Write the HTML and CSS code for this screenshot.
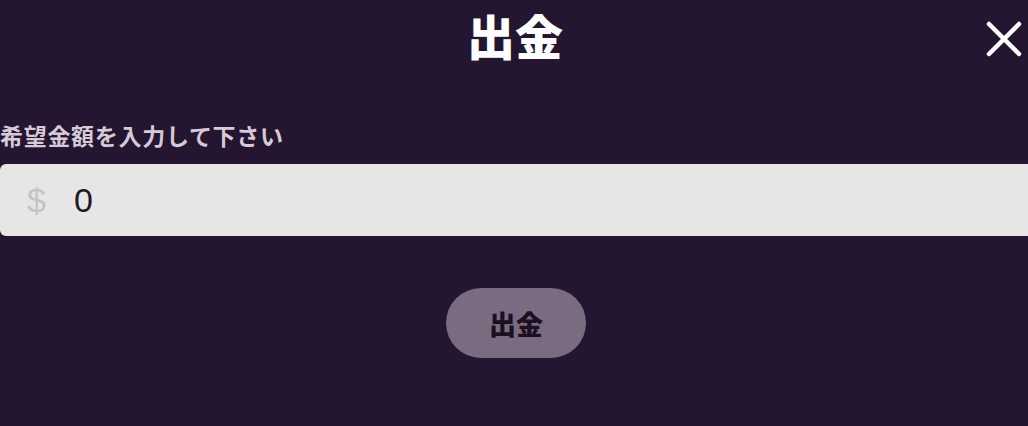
FILE: index.html
```html
<!DOCTYPE html>
<html lang="ja">
<head>
    <meta charset="UTF-8">
    <meta name="viewport" content="width=device-width, initial-scale=1.0">
    <title>出金</title>
    <link rel="stylesheet" href="styles.css">
</head>
<body>
    <div class="modal">
        <div class="modal-header">
            <h1 class="modal-title">出金</h1>
            <button class="close-btn" aria-label="閉じる">
                <svg width="36" height="36" viewBox="0 0 36 36">
                    <path d="M3 3 L33 33 M33 3 L3 33" stroke="#fff" stroke-width="4.5" stroke-linecap="round"/>
                </svg>
            </button>
        </div>

        <label class="field-label" for="amount">希望金額を入力して下さい</label>
        <div class="amount-box">
            <span class="currency">$</span>
            <input class="amount-input" id="amount" type="text" value="0">
        </div>

        <div class="actions">
            <button class="submit-btn">出金</button>
        </div>
    </div>
</body>
</html>
```

FILE: styles.css
```css
body {
    margin: 0;
    background: #241530;
    font-family: "Noto Sans CJK JP", "Noto Sans", sans-serif;
    overflow: hidden;
}

.modal {
    width: 1028px;
    height: 426px;
}

.modal-header {
    position: relative;
    height: 84px;
    display: flex;
    justify-content: center;
    align-items: flex-start;
}

.modal-title {
    margin: 0;
    padding-left: 2px;
    color: #fff;
    font-size: 48px;
    font-weight: 900;
    line-height: 68px;
}

.close-btn {
    position: absolute;
    top: 21px;
    right: 6px;
    background: none;
    border: none;
    padding: 0;
    cursor: pointer;
}

.field-label {
    display: block;
    margin-top: 34px;
    color: #d6cad6;
    font-size: 23px;
    font-weight: 700;
    line-height: 34px;
    letter-spacing: 0.7px;
}

.amount-box {
    margin-top: 12px;
    width: 1040px;
    height: 72px;
    background: #e6e6e6;
    border-radius: 6px;
    display: flex;
    align-items: center;
}

.currency {
    width: 74px;
    padding-left: 27px;
    box-sizing: border-box;
    color: #c4c4c4;
    font-family: "Liberation Sans", sans-serif;
    font-size: 34px;
}

.amount-input {
    flex: 1;
    border: none;
    background: transparent;
    outline: none;
    padding: 0;
    color: #1e1a22;
    font-family: "Liberation Sans", sans-serif;
    font-size: 34px;
}

.actions {
    display: flex;
    justify-content: center;
    margin-top: 52px;
    padding-left: 4px;
}

.submit-btn {
    width: 140px;
    height: 70px;
    border: none;
    border-radius: 35px;
    background: #7a6b81;
    color: #1b1020;
    font-family: "Noto Sans CJK JP", sans-serif;
    font-size: 27px;
    font-weight: 900;
    cursor: pointer;
}
```
